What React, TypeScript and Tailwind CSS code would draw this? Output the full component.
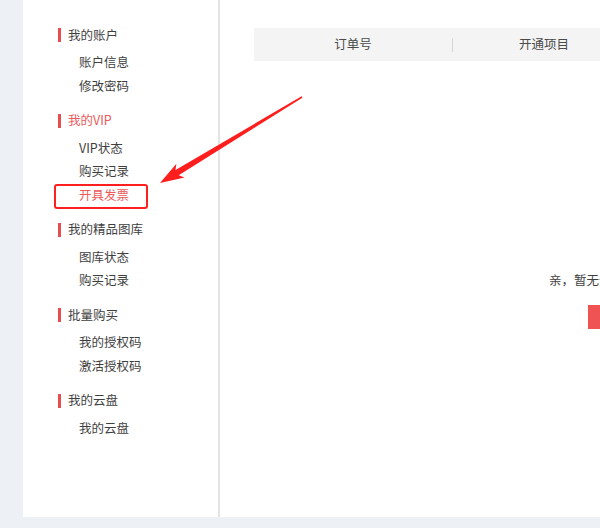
import React from 'react';

type Item = { label: string; active?: boolean; boxed?: boolean };
type Group = { title: string; active?: boolean; items: Item[] };

const groups: Group[] = [
  { title: '我的账户', items: [{ label: '账户信息' }, { label: '修改密码' }] },
  {
    title: '我的VIP',
    active: true,
    items: [{ label: 'VIP状态' }, { label: '购买记录' }, { label: '开具发票', active: true, boxed: true }],
  },
  { title: '我的精品图库', items: [{ label: '图库状态' }, { label: '购买记录' }] },
  { title: '批量购买', items: [{ label: '我的授权码' }, { label: '激活授权码' }] },
  { title: '我的云盘', items: [{ label: '我的云盘' }] },
];

function Sidebar() {
  return (
    <aside className="flex w-[197px] shrink-0 flex-col gap-[10.5px] border-r-2 border-[#e4e4e4] bg-white pt-[23px]">
      {groups.map((g) => (
        <div key={g.title}>
          <div className="flex h-6 items-center pl-[35px]">
            <span className="h-[14px] w-[3px] bg-[#e94c4c]" />
            <span className={`ml-[7px] text-[12.5px] ${g.active ? 'text-[#ec5a5a]' : 'text-[#3f3f3f]'}`}>
              {g.title}
            </span>
          </div>
          <ul className="mt-1">
            {g.items.map((it) => (
              <li
                key={it.label}
                className={`relative flex h-[23.5px] items-center pl-[56px] text-[12.5px] ${
                  it.active ? 'text-[#ec5a5a]' : 'text-[#3f3f3f]'
                }`}
              >
                {it.boxed && (
                  <span className="absolute left-[31px] top-[0.5px] h-[25px] w-[94px] rounded-[3px] border-2 border-[#ff1f1f]" />
                )}
                {it.label}
              </li>
            ))}
          </ul>
        </div>
      ))}
    </aside>
  );
}

function Main() {
  return (
    <main className="min-w-0 flex-1 overflow-hidden bg-white">
      <div className="ml-[34px] mt-[28px] flex h-[33px] w-[415px] items-center bg-[#f4f4f4] text-[12.5px] text-[#4a4a4a]">
        <div className="w-[198px] shrink-0 text-center">订单号</div>
        <div className="h-[14px] w-px shrink-0 bg-[#d6d6d6]" />
        <div className="w-[182px] shrink-0 whitespace-nowrap text-center">开通项目</div>
      </div>
      <div className="ml-[329px] mt-[207px] flex h-6 items-center whitespace-nowrap text-[12.5px] text-[#3f3f3f]">
        亲，暂无开票记录，快去开通VIP吧
      </div>
      <div className="ml-[368px] mt-[13px] flex h-6 w-[90px] items-center justify-center bg-[#ef5353] text-[12px] text-white">
        立即开通
      </div>
    </main>
  );
}

export default function App() {
  return (
    <div
      className="relative flex h-[528px] w-[600px] overflow-hidden bg-[#edf0f5] pb-[11px] pl-[23px]"
      style={{ fontFamily: '"Noto Sans CJK SC", "Noto Sans", sans-serif' }}
    >
      <Sidebar />
      <Main />
      <svg className="pointer-events-none absolute left-0 top-0" width="600" height="528" viewBox="0 0 600 528">
        <polygon
          fill="#ff1e1e"
          points="301.6,96.3 175.5,170 176.4,163.8 160,183 184.6,177.4 178.7,175.2 302.4,97.7"
        />
      </svg>
    </div>
  );
}
